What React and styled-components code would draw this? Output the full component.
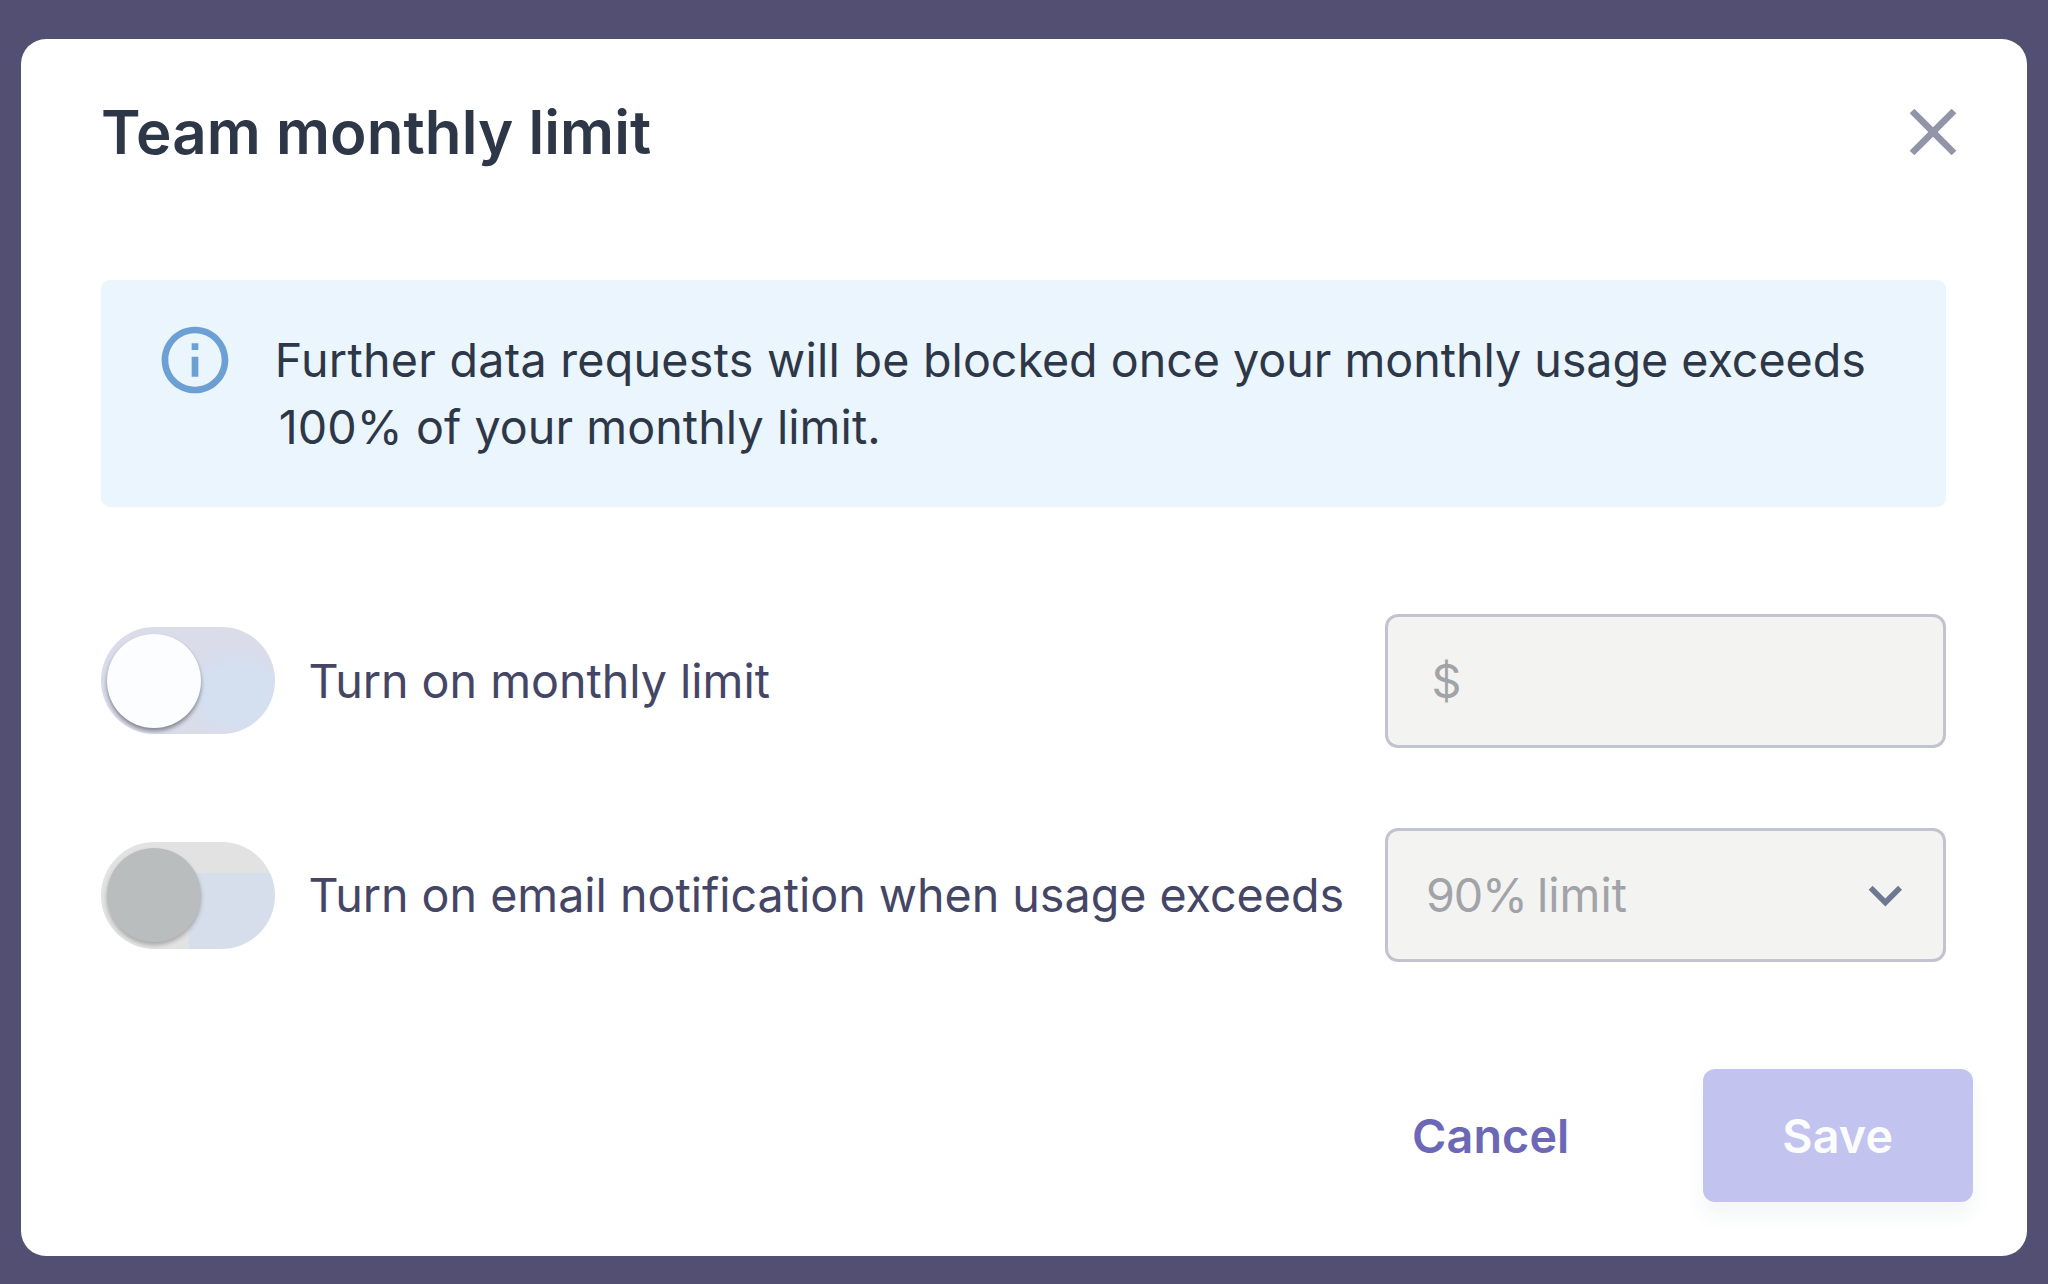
import React from "react";
import styled, { createGlobalStyle, css } from "styled-components";

const Global = createGlobalStyle`
  * { box-sizing: border-box; }
  body {
    margin: 0;
    background: #524f73;
    font-family: Inter, "Noto Sans", sans-serif;
  }
  button { font-family: inherit; }
`;

const Backdrop = styled.div`
  display: flex;
  height: 1284px;
  padding: 39px 21px 28px 20.5px;
  background: #524f73;
`;

const Dialog = styled.section`
  flex: 1;
  display: flex;
  flex-direction: column;
  padding: 53px 54px 53.7px 80.5px;
  border-radius: 25px;
  background: #fefffe;
`;

const Header = styled.header`
  display: flex;
  align-items: center;
  justify-content: space-between;
  height: 80px;
`;

const Title = styled.h1`
  margin: 0;
  font-size: 60px;
  line-height: 80px;
  font-weight: 600;
  letter-spacing: 0.08px;
  color: #2d3748;
`;

const CloseButton = styled.button`
  display: flex;
  padding: 0;
  border: 0;
  background: none;
  color: #9295a7;
`;

const Icon = styled.svg`
  display: block;
  flex: none;
  width: ${(p) => p.$size}px;
  height: ${(p) => p.$size}px;
  fill: currentColor;
`;

const Body = styled.div`
  display: flex;
  flex-direction: column;
  padding: 108px 27px 0 0;
`;

const Notice = styled.div`
  display: flex;
  align-items: flex-start;
  gap: 40px;
  height: 226.5px;
  padding: 40px 53.8px;
  border-radius: 9px;
  background: #eaf5fd;
  color: #6c9fd3;
`;

const NoticeText = styled.p`
  margin: 6.5px 0 0;
  font-size: 46.67px;
  line-height: 67px;
  white-space: nowrap;
  color: #2d3748;
`;

const Run = styled.span`
  margin-left: ${(p) => p.$indent || 0}px;
  letter-spacing: ${(p) => p.$tracking}px;
  word-spacing: ${(p) => p.$words || 0}px;
  white-space: pre;
`;

const Settings = styled.div`
  display: flex;
  flex-direction: column;
  gap: 80.5px;
  padding-top: 107.5px;
`;

const Row = styled.div`
  display: flex;
  align-items: center;
  height: 133.7px;
`;

const lavenderTrack = css`
  background: radial-gradient(ellipse 56px 46px at 136px 66px, #d4dff0 60%, #dadcea 100%) #dadcea;
`;

const greyTrack = css`
  background:
    linear-gradient(#d7deeb, #d7deeb) 88px 31px / 90px 80px no-repeat,
    #e2e2e2;
`;

const Track = styled.button`
  display: flex;
  flex: none;
  align-items: flex-start;
  width: 174px;
  height: 107px;
  padding: 6.5px 6px;
  border: 0;
  border-radius: 54px;
  ${(p) => (p.$disabled ? greyTrack : lavenderTrack)}
`;

const Knob = styled.span`
  width: 94px;
  height: 94px;
  border-radius: 50%;
  background: ${(p) => (p.$disabled ? "#babdbe" : "#fbfdfe")};
  box-shadow: 0 3px 4px rgba(0, 0, 0, ${(p) => (p.$disabled ? 0.25 : 0.4)});
`;

const Label = styled.span`
  flex: 1;
  padding-left: 33.5px;
  font-size: 46.67px;
  line-height: 66.67px;
  letter-spacing: -0.03px;
  white-space: nowrap;
  color: #454666;
`;

const Field = styled.div`
  display: flex;
  flex: none;
  align-items: center;
  justify-content: space-between;
  width: 561px;
  height: 133.7px;
  padding: 0 24px 0 ${(p) => p.$inset}px;
  border: 3px solid #c2c3ce;
  border-radius: 13px;
  background: #f3f3f2;
  font-size: 46.67px;
  line-height: 66.67px;
  color: #a2a3a8;
`;

const Chevron = styled(Icon)`
  color: #6f7891;
`;

const Footer = styled.footer`
  display: flex;
  justify-content: flex-end;
  gap: 76px;
  padding-top: 107px;
`;

const Button = styled.button`
  display: flex;
  align-items: center;
  justify-content: center;
  height: 133.3px;
  width: ${(p) => (p.$primary ? 270.5 : 271.5)}px;
  padding: 0;
  border: 0;
  border-radius: 12px;
  font-size: 46.67px;
  font-weight: 600;
  letter-spacing: 0.1px;
  color: ${(p) => (p.$primary ? "#fbfcfd" : "#6c68b5")};
  background: ${(p) => (p.$primary ? "#c3c3f0" : "transparent")};
  box-shadow: ${(p) => (p.$primary ? "0 13px 20px rgba(60, 70, 120, 0.05)" : "none")};
`;

function Toggle({ label, disabled }) {
  return (
    <Track type="button" role="switch" aria-checked="false" aria-label={label} $disabled={disabled}>
      <Knob $disabled={disabled} />
    </Track>
  );
}

export default function App() {
  return (
    <>
      <Global />
      <Backdrop>
        <Dialog role="dialog">
          <Header>
            <Title>Team monthly limit</Title>
            <CloseButton type="button" aria-label="Close">
              <Icon $size={80} viewBox="0 0 24 24">
                <path d="M19 6.41 17.59 5 12 10.59 6.41 5 5 6.41 10.59 12 5 17.59 6.41 19 12 13.41 17.59 19 19 17.59 13.41 12z" />
              </Icon>
            </CloseButton>
          </Header>
          <Body>
            <Notice>
              <Icon $size={80} viewBox="0 0 24 24">
                <path d="M11 7h2v2h-2zm0 4h2v6h-2zm1-9C6.48 2 2 6.48 2 12s4.48 10 10 10 10-4.48 10-10S17.52 2 12 2zm0 18c-4.41 0-8-3.59-8-8s3.59-8 8-8 8 3.59 8 8-3.59 8-8 8z" />
              </Icon>
              <NoticeText>
                <Run $tracking={0.25}>Further data requests will be </Run>
                <Run $tracking={-0.04}>blocked once your monthly usage exceeds</Run>
                <br />
                <Run $tracking={0.06} $indent={4}>100% of your monthly limit.</Run>
              </NoticeText>
            </Notice>
            <Settings>
              <Row>
                <Toggle label="Turn on monthly limit" />
                <Label>Turn on monthly limit</Label>
                <Field $inset={43.5}>$</Field>
              </Row>
              <Row>
                <Toggle label="Turn on email notification" disabled />
                <Label>Turn on email notification when usage exceeds</Label>
                <Field $inset={38}>
                  <span>
                    <Run $tracking={-1.2} $words={-1.5}>90% </Run>
                    <Run $tracking={0}>limit</Run>
                  </span>
                  <Chevron $size={66.7} viewBox="0 0 24 24">
                    <path d="M7.41 8.59 12 13.17l4.59-4.58L18 10l-6 6-6-6z" />
                  </Chevron>
                </Field>
              </Row>
            </Settings>
          </Body>
          <Footer>
            <Button type="button">Cancel</Button>
            <Button type="button" $primary>Save</Button>
          </Footer>
        </Dialog>
      </Backdrop>
    </>
  );
}
